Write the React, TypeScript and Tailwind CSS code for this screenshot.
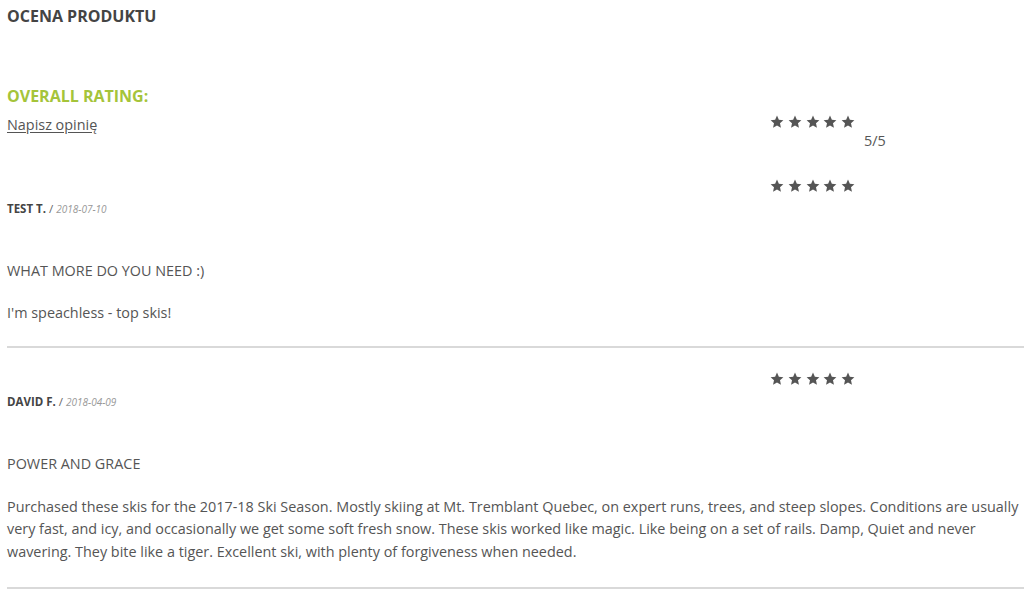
import React from "react";

const Star = () => (
  <svg width="14" height="14" viewBox="0 0 24 24" className="shrink-0">
    <polygon
      fill="#555555"
      points="12,1 15.18,8.13 22.94,8.95 17.14,14.17 18.76,21.8 12,17.9 5.24,21.8 6.86,14.17 1.06,8.95 8.82,8.13"
    />
  </svg>
);

const Stars = () => (
  <div className="flex gap-[3.75px]">
    <Star />
    <Star />
    <Star />
    <Star />
    <Star />
  </div>
);

type Review = {
  name: string;
  date: string;
  title: string;
  body: string;
  top: string;
  bodyTop: string;
  hrTop: string;
};

const reviews: Review[] = [
  {
    name: "TEST T.",
    date: "2018-07-10",
    title: "WHAT MORE DO YOU NEED :)",
    body: "I'm speachless - top skis!",
    top: "mt-[29px]",
    bodyTop: "mt-[20px]",
    hrTop: "mt-[21px]",
  },
  {
    name: "DAVID F.",
    date: "2018-04-09",
    title: "POWER AND GRACE",
    body:
      "Purchased these skis for the 2017-18 Ski Season. Mostly skiing at Mt. Tremblant Quebec, on expert runs, trees, and steep slopes. Conditions are usually very fast, and icy, and occasionally we get some soft fresh snow. These skis worked like magic. Like being on a set of rails. Damp, Quiet and never wavering. They bite like a tiger. Excellent ski, with plenty of forgiveness when needed.",
    top: "mt-[24px]",
    bodyTop: "mt-[21px]",
    hrTop: "mt-[24px]",
  },
];

export default function App() {
  return (
    <div
      className="w-[1024px] h-[606px] overflow-hidden bg-white pl-[7px] text-[#555]"
      style={{ fontFamily: '"Open Sans", sans-serif' }}
    >
      <h2 className="pt-[6px] text-[16px] leading-[20px] font-bold text-[#444]">
        OCENA PRODUKTU
      </h2>
      <div className="mt-[59px] flex">
        <div className="w-[763px]">
          <div className="text-[16px] leading-[22px] font-bold text-[#a5c43a]">
            OVERALL RATING:
          </div>
          <a className="mt-[9px] block text-[14.4px] leading-[18px] underline underline-offset-2 text-[#555]">
            Napisz opinię
          </a>
        </div>
        <div className="pt-[30px]">
          <Stars />
          <div className="ml-[94px] mt-[3px] text-[14.4px] leading-[18px] text-[#555]">
            5/5
          </div>
        </div>
      </div>
      {reviews.map((r, i) => (
        <div key={i} className={r.top}>
          <div className="pl-[763px]">
            <Stars />
          </div>
          <div className="mt-[9px] text-[11.5px] leading-[14px]">
            <span className="font-bold text-[#444]">{r.name}</span>
            <span className="text-[#666]"> / </span>
            <span className="italic text-[10px] text-[#999]">{r.date}</span>
          </div>
          <div className="mt-[44px] text-[14.4px] leading-[22px] text-[#555]">
            {r.title}
          </div>
          <div className={`${r.bodyTop} text-[14.4px] leading-[22.5px] text-[#555] pr-[2px]`}>
            {r.body}
          </div>
          <div className={`${r.hrTop} h-[2px] bg-[#d9d9d9]`} />
        </div>
      ))}
    </div>
  );
}
